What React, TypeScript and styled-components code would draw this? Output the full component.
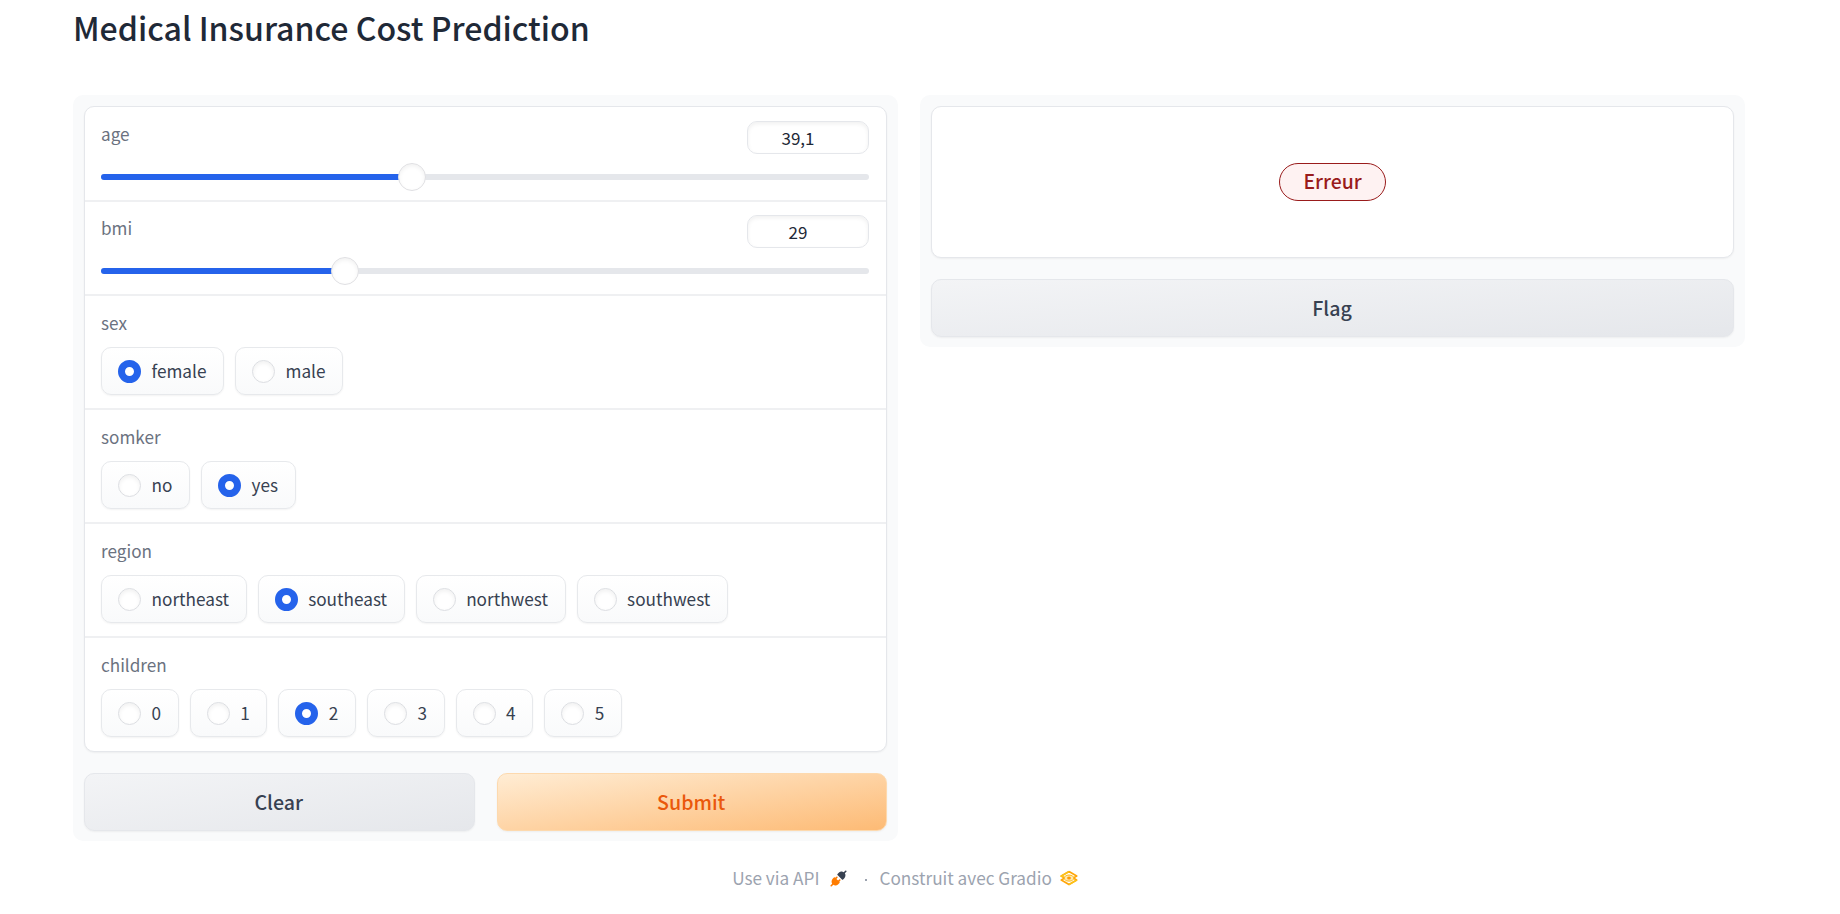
import React, { useState } from "react";
import styled, { createGlobalStyle, css } from "styled-components";

const GlobalStyle = createGlobalStyle`
  *, *::before, *::after { box-sizing: border-box; }
  body {
    margin: 0;
    background: #fff;
    color: #1f2937;
    font-family: "Source Sans Pro", "Noto Sans CJK SC", "Open Sans", sans-serif;
  }
  button, input { font-family: inherit; }
`;

const Page = styled.main`
  width: 1840px;
  height: 914px;
  overflow: hidden;
  padding: 7px 95px 0 73px;
`;

const Title = styled.h1`
  margin: 0 0 48px;
  height: 40px;
  font-size: 32.1px;
  line-height: 40px;
  font-weight: 500;
  white-space: nowrap;
`;

const Columns = styled.div`
  display: flex;
  align-items: flex-start;
  gap: 22px;
`;

const Panel = styled.section`
  flex: 1;
  min-width: 0;
  padding: 11px 11px 10px;
  display: flex;
  flex-direction: column;
  gap: 21px;
  border-radius: 10px;
  background: #f9fafb;
`;

const Card = styled.div`
  border: 1px solid #e5e7eb;
  border-radius: 10px;
  background: #fff;
  box-shadow: 0 1px 2px rgba(0, 0, 0, 0.05);
`;

const OutputCard = styled(Card)`
  height: 152px;
  display: flex;
  align-items: center;
  justify-content: center;
`;

const ErrorBadge = styled.span`
  height: 38px;
  padding: 0 23px;
  border: 1px solid #991b1b;
  border-radius: 19px;
  background: #fef2f2;
  color: #991b1b;
  font-size: 19.4px;
  font-weight: 500;
  line-height: 34px;
`;

const Field = styled.div<{ $height: number; $last?: boolean }>`
  height: ${(p) => p.$height}px;
  padding: 14px 17px 0 16px;
  border-bottom: ${(p) => (p.$last ? "none" : "2px solid #eff0f2")};
`;

const SliderBox = styled(Field)<{ $top: number }>`
  padding-top: ${(p) => p.$top}px;
`;

const FieldHead = styled.div`
  display: flex;
  justify-content: space-between;
  align-items: flex-start;
`;

const Label = styled.span`
  color: #6b7280;
  font-size: 17.15px;
  line-height: 26px;
`;

const NumberInput = styled.input`
  width: 122px;
  height: 33px;
  padding: 0 20px 0 0;
  border: 1px solid #e5e7eb;
  border-radius: 10px;
  outline: none;
  background: #fff;
  box-shadow: inset 0 2px 4px rgba(0, 0, 0, 0.06);
  color: #1f2937;
  font-size: 17px;
  text-align: center;
`;

const Track = styled.div`
  position: relative;
  height: 6px;
  margin-top: 19.5px;
  border-radius: 3px;
  background: #e5e7eb;
`;

const Fill = styled.div`
  height: 100%;
  border-radius: 3px;
  background: #2563eb;
`;

const Thumb = styled.div`
  position: absolute;
  top: -11px;
  width: 28px;
  height: 28px;
  margin-left: -14px;
  border: 1px solid #e0e0e3;
  border-radius: 50%;
  background: #fff;
  box-shadow: inset 0 2px 4px rgba(0, 0, 0, 0.06);
`;

const Options = styled.div`
  display: flex;
  gap: 11px;
  margin-top: 11px;
`;

const Option = styled.button`
  height: 48px;
  padding: 0 16.6px 0 16px;
  display: flex;
  align-items: center;
  gap: 10.5px;
  border: 1px solid #e7e9ec;
  border-radius: 10px;
  background: linear-gradient(to bottom, #fff, #f9fafb);
  box-shadow: 0 1px 2px rgba(0, 0, 0, 0.05);
  color: #374151;
  font-size: 17.2px;
  line-height: 24px;
`;

const Dot = styled.span<{ $on: boolean }>`
  flex: none;
  width: 23px;
  height: 23px;
  border-radius: 50%;
  ${(p) =>
    p.$on
      ? css`
          border: 7px solid #2563eb;
          background: #fff;
        `
      : css`
          border: 1px solid #dcdee2;
          background: #fff;
          box-shadow: inset 0 2px 4px rgba(0, 0, 0, 0.06);
        `}
`;

const Actions = styled.div`
  display: flex;
  gap: 22px;
`;

const Button = styled.button<{ $primary?: boolean }>`
  flex: 1 1 0;
  min-height: 58px;
  padding: 0 1px 1px 0;
  border: 1px solid ${(p) => (p.$primary ? "#fdd9ae" : "#e5e7eb")};
  border-radius: 10px;
  background: ${(p) =>
    p.$primary
      ? "linear-gradient(to bottom right, #ffedd5, #fdba74)"
      : "linear-gradient(to bottom right, #f3f4f6, #e5e7eb)"};
  background-origin: border-box;
  box-shadow: 0 1px 2px rgba(0, 0, 0, 0.05);
  color: ${(p) => (p.$primary ? "#ea580c" : "#374151")};
  font-size: 19.6px;
  font-weight: 500;
  line-height: 28px;
`;

const Footer = styled.footer`
  display: flex;
  justify-content: center;
  align-items: center;
  height: 28px;
  margin-top: 23px;
  padding-right: 8px;
  color: #9ca3af;
  font-size: 17.2px;
  line-height: 28px;
`;

const FooterItem = styled.span<{ $gap: number }>`
  display: flex;
  align-items: center;
  gap: ${(p) => p.$gap}px;
`;

const Separator = styled.span`
  width: 32px;
  padding-left: 5px;
  text-align: center;
`;

const SeparatorDot = styled.i`
  display: inline-block;
  width: 2px;
  height: 2px;
  vertical-align: middle;
  background: #9ca3af;
`;

const PlugIcon = () => (
  <svg width="17" height="17" viewBox="0 0 28 28" fill="none">
    <path
      fill="#374151"
      d="M26.94 2.94a1.33 1.33 0 0 0-1.88-1.88l-2.49 2.48c-1.45-.95-3.03-1.11-4.4-.9-1.62.25-3.06 1.03-3.78 1.75l-2 2a1.33 1.33 0 0 0 0 1.89l7.33 7.33a1.33 1.33 0 0 0 1.89 0l2-2c.72-.72 1.5-2.16 1.75-3.79.21-1.36.05-2.94-.9-4.39l2.48-2.49Z"
    />
    <path
      fill="#ff7c00"
      d="M12.28 12.94a1.33 1.33 0 0 0-1.89-1.88l-1.72 1.72-.39-.39a1.33 1.33 0 0 0-1.89 0l-2 2c-.72.72-1.5 2.16-1.75 3.79-.21 1.36-.05 2.94.9 4.39l-2.48 2.49a1.33 1.33 0 0 0 1.88 1.88l2.49-2.48c1.45.95 3.03 1.11 4.39.9 1.63-.25 3.07-1.03 3.79-1.75l2-2a1.33 1.33 0 0 0 0-1.89l-.39-.39 1.72-1.72a1.33 1.33 0 0 0-1.88-1.89l-1.73 1.73-2.78-2.78 1.73-1.73Z"
    />
  </svg>
);

const GradioIcon = () => (
  <svg width="18" height="17" viewBox="0 0 18 17" fill="none">
    <path
      d="M9 1.6 1.3 6.1 9 10.6M9 1.6l7.7 4.5L9 10.6"
      stroke="#ffa60a"
      strokeWidth="1.7"
      strokeLinejoin="round"
    />
    <path
      d="M9 5.600 1.300 10.100 9 14.600l7.700-4.500Z"
      stroke="#ffa60a"
      strokeWidth="1.700"
      strokeLinejoin="round"
    />
    <path d="M9 1.600 1.300 6.100l2 1.200M16.700 10.100 9 14.600" stroke="#fcc419" strokeWidth="1.500" />
    <ellipse cx="9" cy="8.100" rx="4.600" ry="3" fill="#ffe7ac" stroke="#fbbd2a" strokeWidth="1" />
    <ellipse cx="9" cy="8.100" rx="1.900" ry="1.500" fill="#ff9a05" />
  </svg>
);

interface SliderProps {
  label: string;
  value: string;
  percent: number;
  height: number;
  top: number;
}

const SliderField = ({ label, value, percent, height, top }: SliderProps) => (
  <SliderBox $height={height} $top={top}>
    <FieldHead>
      <Label>{label}</Label>
      <NumberInput defaultValue={value} aria-label={label} />
    </FieldHead>
    <Track>
      <Fill style={{ width: `${percent}%` }} />
      <Thumb style={{ left: `${percent}%` }} />
    </Track>
  </SliderBox>
);

interface RadioProps {
  label: string;
  options: string[];
  initial: string;
  last?: boolean;
}

const RadioField = ({ label, options, initial, last }: RadioProps) => {
  const [selected, setSelected] = useState(initial);
  return (
    <Field $height={last ? 113 : 114} $last={last}>
      <FieldHead>
        <Label>{label}</Label>
      </FieldHead>
      <Options role="radiogroup" aria-label={label}>
        {options.map((option) => (
          <Option
            key={option}
            role="radio"
            aria-checked={option === selected}
            onClick={() => setSelected(option)}
          >
            <Dot $on={option === selected} />
            {option}
          </Option>
        ))}
      </Options>
    </Field>
  );
};

export default function App() {
  return (
    <>
      <GlobalStyle />
      <Page>
        <Title>Medical Insurance Cost Prediction</Title>
        <Columns>
          <Panel>
            <Card>
              <SliderField label="age" value="39,1" percent={40.45} height={95} top={14} />
              <SliderField label="bmi" value="29" percent={31.8} height={94} top={13} />
              <RadioField label="sex" options={["female", "male"]} initial="female" />
              <RadioField label="somker" options={["no", "yes"]} initial="yes" />
              <RadioField
                label="region"
                options={["northeast", "southeast", "northwest", "southwest"]}
                initial="southeast"
              />
              <RadioField
                label="children"
                options={["0", "1", "2", "3", "4", "5"]}
                initial="2"
                last
              />
            </Card>
            <Actions>
              <Button>Clear</Button>
              <Button $primary>Submit</Button>
            </Actions>
          </Panel>
          <Panel>
            <OutputCard>
              <ErrorBadge>Erreur</ErrorBadge>
            </OutputCard>
            <Button>Flag</Button>
          </Panel>
        </Columns>
        <Footer>
          <FooterItem $gap={11}>
            Use via API <PlugIcon />
          </FooterItem>
          <Separator>
            <SeparatorDot />
          </Separator>
          <FooterItem $gap={8}>
            Construit avec Gradio <GradioIcon />
          </FooterItem>
        </Footer>
      </Page>
    </>
  );
}
